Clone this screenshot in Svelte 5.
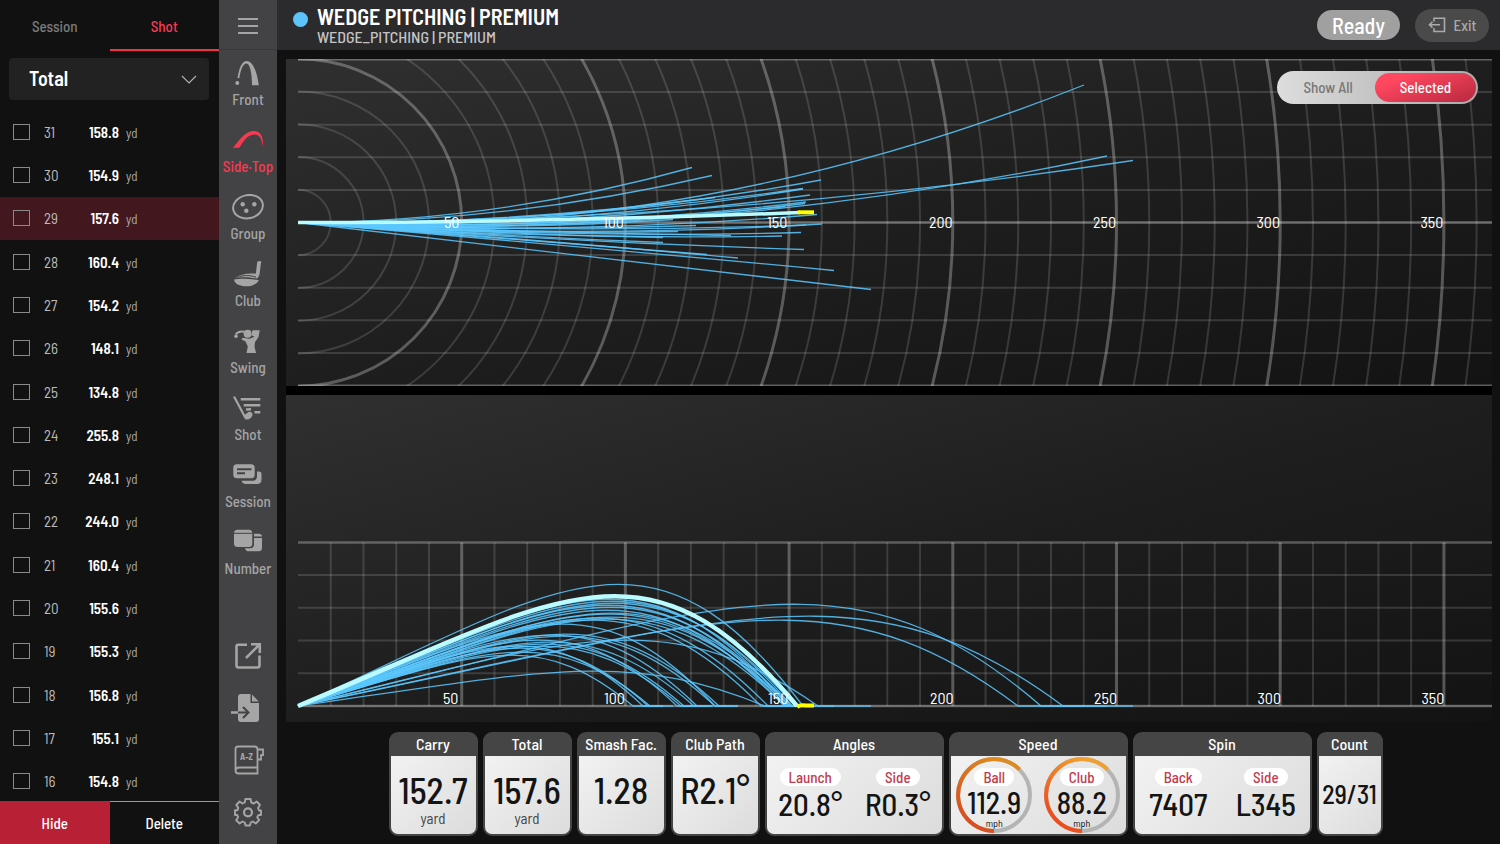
<script>
  const shots = [
    [31, '158.8'], [30, '154.9'], [29, '157.6'], [28, '160.4'], [27, '154.2'], [26, '148.1'],
    [25, '134.8'], [24, '255.8'], [23, '248.1'], [22, '244.0'], [21, '160.4'], [20, '155.6'],
    [19, '155.3'], [18, '156.8'], [17, '155.1'], [16, '154.8']
  ];
  const views = ['Front', 'Side·Top', 'Group', 'Club', 'Swing', 'Shot', 'Session', 'Number'];
  const tools = ['Open in new window', 'Import file', 'Glossary', 'Settings'];
  let activeView = $state('Side·Top');
  let mode = $state('Selected');

  const step = 32.74;
  const ox = 12;
  const oy = 163.5;
  const base = 311;
  const range = (n) => Array.from({ length: n }, (_, i) => i);
  const marks = [50, 100, 150, 200, 250, 300, 350];

  // Top view: carry end x, end offset, initial slope
  const top = [
    [394, 55, 0], [414, 47, -0.005], [786, 137.5, -0.048], [809, 66.5, -0.049], [835, 62, -0.002],
    [523, 42.5, -0.02], [505, 34, -0.01], [505, 33.5, -0.03], [512, 27.5, -0.03], [508, 20.5, -0.04],
    [507, 19, -0.05], [519, 8, -0.055], [524, -1.5, -0.065], [508, -2.5, -0.045], [503, -10, -0.065],
    [484, -13.5, -0.075], [506, -27, -0.075], [536, -48, -0.084], [573, -67, -0.12], [433, -13, -0.045],
    [409, -32, -0.08], [440, -35.5, -0.07], [417, 25, -0.01], [487, 16, -0.035], [398, -3, -0.05],
    [365, -20, -0.07], [375, 3, -0.05], [365, -15, -0.06], [391, 8, -0.04], [380, -9, -0.065]
  ];
  // Side view: carry length, apex height, total length
  const side = [
    [505, 122, 518], [743, 102, 809], [765, 90, 835], [720, 86, 786], [467, 35, 536], [520, 66, 573],
    [490, 107, 510], [494, 105, 508], [497, 103, 512], [488, 101, 505], [492, 99, 510], [486, 96, 506],
    [494, 93, 512], [489, 92, 507], [492, 89, 508], [487, 87, 505], [417, 82, 440], [470, 88, 487],
    [463, 86, 485], [421, 72, 440], [417, 70, 433], [399, 71, 415], [396, 64, 414], [386, 62, 409],
    [383, 60, 398], [379, 66, 394], [352, 54, 365], [350, 58, 375], [345, 60, 365], [335, 51, 352]
  ];
  const topPath = ([x, y, a]) => `M${ox} ${oy}Q${ox + x / 2} ${oy - (a * x) / 2} ${ox + x} ${oy - y}`;
  const flight = (l, h) => {
    const [rise, fall] = l > 700 ? [0.57, 0.74] : [0.52, 0.7];
    return `M${ox} ${base}C${ox + rise * l} ${base - 0.98 * h} ${ox + fall * l} ${base - 1.64 * h} ${ox + l} ${base}`;
  };
</script>

{#snippet viewIcon(name)}
  <svg class="icon" viewBox="0 0 32 28" aria-hidden="true">
    {#if name === 'Front'}
      <path d="M5.5 18C7 8 10 1 14.7 1C20.5 1 25 11 26.8 25.3H20C20 14 18 3.6 14.5 3.6C11 3.6 8.5 10 7.3 18.3Z" />
      <circle cx="5.3" cy="23" r="2" />
    {:else if name === 'Side·Top'}
      <path d="M1 20.7C8 12 14 4 21.5 4C29 4 32 11 30.6 19.5C30 11 27 7 22 7.5C16 8 12 13 7.3 20.7Z" />
    {:else if name === 'Group'}
      <ellipse cx="16" cy="12.7" rx="15" ry="11.6" transform="rotate(-12 16 12.7)" fill="none" stroke="currentColor" stroke-width="2" />
      <circle cx="10.7" cy="10.3" r="2.2" /><circle cx="22.3" cy="10.3" r="2.2" /><circle cx="14.3" cy="16.7" r="2.2" />
    {:else if name === 'Club'}
      <path d="M25.3 0.5L29.2 0L28 9.500C27.800 14 26.500 17.300 24.500 17.500C18 16.300 10 15.500 3.500 17C8 13.300 16 11.800 23.800 12.800Z" />
      <path class="cut thin" d="M5 16.800C11 13.800 18 14 24 16.200" />
      <path d="M2 18.500C9 17.200 17 18.200 26.800 19C25 23.500 18 26 12 25.200C6 24.500 2.500 22 2 18.500Z" />
    {:else if name === 'Swing'}
      <circle cx="15.6" cy="5.8" r="4" />
      <path d="M12.500 3.700C9 3 5.500 3.600 3.800 6.500" fill="none" stroke="currentColor" stroke-width="2" />
      <circle cx="4" cy="8.2" r="1.8" />
      <path d="M20.500 2.200L27.700 2.200L26.500 9L23 14.300L22.500 18.500L24 25H14.500L15.800 18.500L13.500 13.500L9.500 11.500L10.500 9.800L17.500 10.800L22.500 8.700L19.500 7.200Z" />
    {:else if name === 'Shot'}
      <path d="M2.4 2.3L13 22" fill="none" stroke="currentColor" stroke-width="2.200" stroke-linecap="round" />
      <path d="M12 20.5L16.5 17C19.5 16.3 21 18.5 20.3 20.8C19 24.2 14 25.8 12.5 23.3Z" />
      <path d="M8.700 4.300H28.300M11.700 10.300H28.300M22.500 17.300H28.300M14 14.500L19 14.300" stroke="currentColor" stroke-width="2.400" />
    {:else if name === 'Session'}
      <path d="M25 9.5H27Q29.5 9.5 29.5 12V17.5Q29.5 22 25 22H14Q10.5 22 9.5 18.7H20.5Q25 18.7 25 14Z" />
      <rect x="1.3" y="2.3" width="21.4" height="14" rx="3.5" />
      <path class="cut" d="M5 7.3H19.5M5 11.3H13" />
    {:else}
      <path d="M22 9H30V19Q30 22.3 26.5 22.3H17Q13.5 22.3 13 19.2H19Q22 18.7 22 15Z" />
      <path d="M22 7.5V4.7H26.5Q30 4.7 30 7.5Z" />
      <rect x="2" y="0.7" width="18.3" height="17.3" rx="3.5" />
      <path class="cut thin" d="M2 4.3H20.3" />
    {/if}
  </svg>
{/snippet}

{#snippet toolIcon(i)}
  <svg class="tool-icon" viewBox="0 0 32 30" aria-hidden="true" fill="none" stroke="currentColor" stroke-width="2.2">
    {#if i === 0}
      <path d="M15 3.7H6Q4.500 3.7 4.500 5.500V24.500Q4.500 26.500 6.500 26.500H25.500Q27.500 26.500 27.500 24.500V14.500" stroke-width="2.600" />
      <path d="M14 17L26.500 4.500M19 3.200H27.800V12" stroke-width="2.600" />
    {:else if i === 1}
      <path d="M9 1H18.500V10H27V26Q27 29 24 29H9Q6 29 6 26V4Q6 1 9 1Z" fill="currentColor" stroke="none" />
      <path d="M20 1.500L26.700 8.500H20Z" fill="currentColor" stroke="none" />
      <path class="cut" d="M6 19.500H15M11 14L16.500 19.500L11 25" />
      <path d="M-1 19.500H6" stroke-width="2.500" />
    {:else if i === 2}
      <path d="M6 1.500H22.500Q25.500 1.500 25.500 4.500V28.500H6.500Q3.500 28.500 3.500 25.500V4Q3.500 1.500 6 1.500ZM3.700 25Q4 22.500 7 22.500H25M26 4.500H31V10H28.500M29 10V14.500H26" stroke-width="1.800" />
      <text x="14.500" y="15" text-anchor="middle">A-Z</text>
    {:else}
      <path d="M13.4 2.500H18.600L19.300 6L21.800 7L24.700 5L28 8.500L26 11.500L27 14H29V18.500H26.500L25.200 20.700L27.200 23.600L23.800 27L20.800 25L18.700 26L18 29H13.500L12.800 26L10.500 25L7.600 27L4.200 23.700L6.100 20.700L5.200 18.500H3V13.700H5.500L6.300 11.400L4.300 8.500L7.600 5L10.500 7L12.700 6Z" transform="translate(0 -.5)" stroke-width="1.900" stroke-linejoin="round" />
      <circle cx="16" cy="15.300" r="4" />
    {/if}
  </svg>
{/snippet}

<div class="app">
  <aside class="shots">
    <div class="tabs">
      <button>Session</button>
      <button class="on">Shot</button>
    </div>
    <div class="picker">
      <select aria-label="Value shown">
        <option>Total</option>
        <option>Carry</option>
      </select>
      <svg viewBox="0 0 16 9" aria-hidden="true"><path d="M1 1L8 8L15 1" /></svg>
    </div>
    <ul>
      {#each shots as [n, value]}
        <li class:current={n === 29}>
          <label>
            <input type="checkbox" />
            <span class="num">{n}</span>
            <strong>{value}</strong>
            <span class="unit">yd</span>
          </label>
        </li>
      {/each}
    </ul>
    <div class="actions">
      <button class="hide">Hide</button>
      <button>Delete</button>
    </div>
  </aside>

  <nav>
    <button class="menu" aria-label="Menu">
      <svg viewBox="0 0 20 18" aria-hidden="true"><path d="M0 2H20M0 9H20M0 16H20" /></svg>
    </button>
    {#each views as name}
      <button class="view" class:active={activeView === name} onclick={() => (activeView = name)}>
        {@render viewIcon(name)}
        <span>{name}</span>
      </button>
    {/each}
    <div class="tools">
      {#each tools as label, i}
        <button aria-label={label}>{@render toolIcon(i)}</button>
      {/each}
    </div>
  </nav>

  <main>
    <header>
      <i class="dot"></i>
      <div class="heading">
        <h1>WEDGE PITCHING | PREMIUM</h1>
        <p>WEDGE_PITCHING | PREMIUM</p>
      </div>
      <span class="ready">Ready</span>
      <button class="exit">
        <svg viewBox="0 0 18 16" aria-hidden="true"><path d="M6 4.500V1.200H16.500V14.500H6V11.200M12 7.800H1.500M4.500 4.800L1.500 7.800L4.500 10.800" /></svg>
        Exit
      </button>
    </header>

    <section class="charts">
      <div class="panel">
        <svg viewBox="0 0 1206 327" role="img" aria-label="Top view">
          <defs><clipPath id="field"><rect x="12" y="0" width="1194" height="327" /></clipPath></defs>
          <g clip-path="url(#field)">
            {#each range(11) as i}
              <path class="grid" class:edge={i === 0 || i === 10} d="M12 {oy + (i - 5) * 32.6}H1206" />
            {/each}
            <path class="axis" d="M12 {oy}H1206" />
            {#each range(37) as i}
              <circle class={(i + 1) % 5 ? 'grid' : 'major'} cx={ox} cy={oy} r={(i + 1) * step} />
            {/each}
          </g>
          {#each top as s}
            <path class="track" d={topPath(s)} />
          {/each}
          <path class="best" d="M12 {oy}Q255 {oy} 514 153.500" />
          <path class="roll" d="M512 153.300H528" />
          {#each marks as m}
            <text class="mark" x={ox + m * 3.274 - (m === 50 ? 10 : 12)} y="169" text-anchor="middle">{m}</text>
          {/each}
        </svg>
        <div class="toggle">
          {#each ['Show All', 'Selected'] as m}
            <button class:on={mode === m} onclick={() => (mode = m)}>{m}</button>
          {/each}
        </div>
      </div>
      <div class="panel">
        <svg viewBox="0 0 1206 327" role="img" aria-label="Side view">
          {#each range(5) as i}
            <path class="grid" d="M12 {base - i * step}H1206" />
          {/each}
          {#each range(36) as i}
            <path class={i && i % 5 === 0 ? 'major' : 'grid'} class:none={i === 0} d="M{ox + i * step} 147.500V{base}" />
          {/each}
          <path class="axis" d="M12 147.500H1206M12 {base}H1206" />
          {#each side as [l, h, total]}
            <path class="track" d="{flight(l, h)}H{ox + total}" />
          {/each}
          <path class="best wide" d={flight(499, 110)} />
          <path class="roll" d="M511 312Q514 309.500 520 310.500H528" />
          {#each marks as m}
            <text class="mark" x={ox + m * 3.274 - 11} y="309" text-anchor="middle">{m}</text>
          {/each}
        </svg>
      </div>
    </section>

    <section class="cards">
      <article>
        <h2>Carry</h2>
        <div class="body"><b>152.7</b><small>yard</small></div>
      </article>
      <article>
        <h2>Total</h2>
        <div class="body"><b>157.6</b><small>yard</small></div>
      </article>
      <article>
        <h2>Smash Fac.</h2>
        <div class="body"><b>1.28</b></div>
      </article>
      <article>
        <h2>Club Path</h2>
        <div class="body"><b>R2.1°</b></div>
      </article>
      <article class="double">
        <h2>Angles</h2>
        <div class="pair">
          <div><span>Launch</span><b>20.8°</b></div>
          <div><span>Side</span><b>R0.3°</b></div>
        </div>
      </article>
      <article class="double">
        <h2>Speed</h2>
        <div class="pair">
          {#each [['Ball', '112.9', '#d8501f', '#dd8a20'], ['Club', '88.2', '#ee4c1c', '#f0a030']] as [label, value, from, to], i}
            <div class="dial">
              <svg viewBox="0 0 78 78" aria-hidden="true">
                <defs>
                  <linearGradient id="arc{i}" x1="0" y1="1" x2="0.600" y2="0">
                    <stop offset="0.200" stop-color={from} /><stop offset="1" stop-color={to} />
                  </linearGradient>
                </defs>
                <circle cx="39" cy="39" r="36" fill="none" stroke="#b4b4b4" stroke-width="4" />
                <path d="M39 75A36 36 0 1 1 64.500 13.500" fill="none" stroke="url(#arc{i})" stroke-width="4" />
              </svg>
              <span>{label}</span><b>{value}</b><small>mph</small>
            </div>
          {/each}
        </div>
      </article>
      <article class="double">
        <h2>Spin</h2>
        <div class="pair">
          <div><span>Back</span><b>7407</b></div>
          <div><span>Side</span><b>L345</b></div>
        </div>
      </article>
      <article class="count">
        <h2>Count</h2>
        <div class="body"><b>29/31</b></div>
      </article>
    </section>
  </main>
</div>

<style>
  :global(body) { margin: 0; background: #111; }
  .app {
    display: grid;
    grid-template-columns: 219px 58px 1fr;
    min-height: 100vh;
    background: #111;
    color: #fff;
    font-family: "Barlow Semi Condensed", "Barlow Condensed", "Roboto Condensed", Roboto, sans-serif;
  }
  button, select, input { font: inherit; color: inherit; margin: 0; }
  button { border: 0; padding: 0; background: none; cursor: pointer; }
  h1, h2, p, ul { margin: 0; padding: 0; }

  .shots { display: flex; flex-direction: column; overflow: hidden; }
  .tabs { display: flex; height: 51px; }
  .tabs button { flex: 1; padding-top: 3px; border-bottom: 2px solid transparent; color: #7c7c7c; font-size: 15px; font-weight: 500; }
  .tabs .on { color: #fb3850; border-color: #f23048; }
  .picker { position: relative; margin: 7px 10px 10px 9px; }
  .picker select { width: 100%; height: 42px; padding: 0 20px 2px; border: 0; border-radius: 4px; background: #222; font-size: 20px; font-weight: 600; appearance: none; }
  .picker svg { position: absolute; right: 12px; top: 17px; width: 16px; fill: none; stroke: #b0b0b0; stroke-width: 1.200; pointer-events: none; }
  ul { flex: 1; display: grid; grid-auto-rows: 1fr; margin-bottom: -2px; list-style: none; }
  li { display: flex; }
  .current { background: #42171e; }
  label { flex: 1; display: grid; grid-template-columns: 17px 28px 33px 1fr; column-gap: 14px; align-items: center; padding-left: 13px; }
  input { width: 17px; height: 16px; border: 1px solid #8a8a8a; appearance: none; }
  .num { font-size: 15px; color: #bbb; }
  strong { margin-left: -14px; text-align: right; font-size: 15px; font-weight: 600; }
  .unit { margin-left: -7px; padding-top: 2px; font-size: 13px; color: #aaa; }
  .actions { position: relative; display: flex; height: 42px; border-top: 1px solid #999; background: #111; }
  .actions button { flex: 1; font-size: 15px; font-weight: 500; }
  .actions .hide { margin-top: -1px; background: #b82035; }

  nav { display: flex; flex-direction: column; background: #434345; color: #a5a5a5; }
  .menu { height: 50px; border-bottom: 1px solid #38383a; }
  .menu svg { width: 20px; stroke: currentColor; stroke-width: 2; vertical-align: middle; }
  .view { display: flex; flex-direction: column; align-items: center; height: 67px; padding-top: 10px; font-size: 15px; line-height: 18px; font-weight: 500; white-space: nowrap; }
  .view span { padding-top: 2px; }
  .active { color: #fb3850; }
  .icon { width: 32px; height: 28px; fill: currentColor; flex: none; }
  .cut { stroke: #434345; stroke-width: 2; fill: none; }
  .thin { stroke-width: 1; }
  .tools { display: grid; grid-auto-rows: 52px; margin-top: auto; padding-bottom: 6px; }
  .tool-icon { width: 32px; height: 30px; vertical-align: middle; overflow: visible; }
  .tool-icon text { font-size: 9px; font-weight: 700; fill: currentColor; stroke: none; }

  main { display: flex; flex-direction: column; min-width: 0; }
  header { display: flex; height: 50px; box-sizing: border-box; padding: 0 11px 0 16px; background: #2b2b2d; align-items: center; }
  .dot { width: 15px; height: 15px; margin: 0 9px 12px 0; border-radius: 50%; background: #5cc4fb; }
  .heading { flex: 1; }
  h1 { font-size: 22px; line-height: 24px; font-weight: 600; }
  p { font-size: 16px; line-height: 18px; font-weight: 500; color: #c4c4c4; }
  .ready { width: 83px; margin-right: 15px; border-radius: 16px; background: #a0a0a0; font-size: 22px; line-height: 30px; font-weight: 500; text-align: center; }
  .exit { display: flex; align-items: center; justify-content: center; gap: 8px; width: 74px; height: 33px; border-radius: 17px; background: #4a4a4a; color: #aaa; font-size: 15px; font-weight: 500; }
  .exit svg { width: 18px; fill: none; stroke: currentColor; stroke-width: 1.600; }

  .charts { display: grid; gap: 9px; margin: 9px 8px 0 9px; background: #000; }
  .panel { position: relative; background: linear-gradient(165deg, #303030 0%, #1e1e1e 50%, #131313 100%); }
  .panel > svg { display: block; width: 100%; }
  .grid, .major, .axis { fill: none; stroke: #fff; stroke-opacity: 0.140; stroke-width: 2; }
  .edge { stroke-opacity: 0.300; }
  .major { stroke-opacity: 0.280; stroke-width: 3; }
  .axis { stroke-opacity: 0.280; stroke-width: 2.500; }
  .none { stroke: none; }
  .track { fill: none; stroke: #5bc8ff; stroke-opacity: 0.850; stroke-width: 1.300; }
  .best { fill: none; stroke: #b9fbff; stroke-width: 3.500; }
  .wide { stroke-width: 4.500; }
  .roll { fill: none; stroke: #ff0; stroke-width: 4; }
  .mark { fill: #fff; font-size: 16px; }
  .toggle { position: absolute; top: 12px; right: 14px; display: grid; grid-template-columns: 94px 1fr; width: 201px; height: 33px; box-sizing: border-box; padding: 2px 2px 2px 4px; border-radius: 17px; background: linear-gradient(90deg, #ddd, #aaa); color: #777; font-size: 15px; line-height: 28px; font-weight: 500; }
  .toggle button { border-radius: 15px; padding-bottom: 1px; }
  .toggle .on { color: #fff; background: linear-gradient(160deg, #ff4860 20%, #b82840); }

  .cards { display: flex; justify-content: center; gap: 5px; padding: 10px 14px 8px 8px; }
  article { display: flex; flex-direction: column; width: 89px; height: 104px; box-sizing: border-box; padding: 0 2px 2px; border-radius: 9px; background: #454545; color: #141414; }
  .double { width: 179px; }
  .count { width: 66px; }
  h2 { color: #fff; font-size: 16px; line-height: 24px; font-weight: 500; text-align: center; white-space: nowrap; }
  .body, .pair { flex: 1; border-radius: 0 0 7px 7px; background: linear-gradient(135deg, #f2f2f2, #dcdcdc); }
  .body { display: flex; flex-direction: column; align-items: center; padding-top: 14px; }
  b { font-weight: 500; }
  .body b { font-size: 36px; line-height: 40px; }
  .body small { font-size: 15px; line-height: 16px; color: #444; }
  .count .body b { font-size: 26px; line-height: 48px; }
  .pair { display: grid; grid-template-columns: 1fr 1fr; }
  .pair > div { position: relative; display: flex; flex-direction: column; align-items: center; padding-top: 12px; }
  .pair span { position: relative; padding: 0 9px; border-radius: 9px; background: #fff; color: #c23a4e; font-size: 15px; line-height: 18px; font-weight: 500; }
  .pair b { position: relative; font-size: 31px; line-height: 36px; }
  .dial svg { position: absolute; top: 0; width: 78px; height: 78px; }
  .dial small { position: relative; font-size: 10px; line-height: 8px; }
  .pair .dial b { font-size: 30px; line-height: 33px; }
</style>
